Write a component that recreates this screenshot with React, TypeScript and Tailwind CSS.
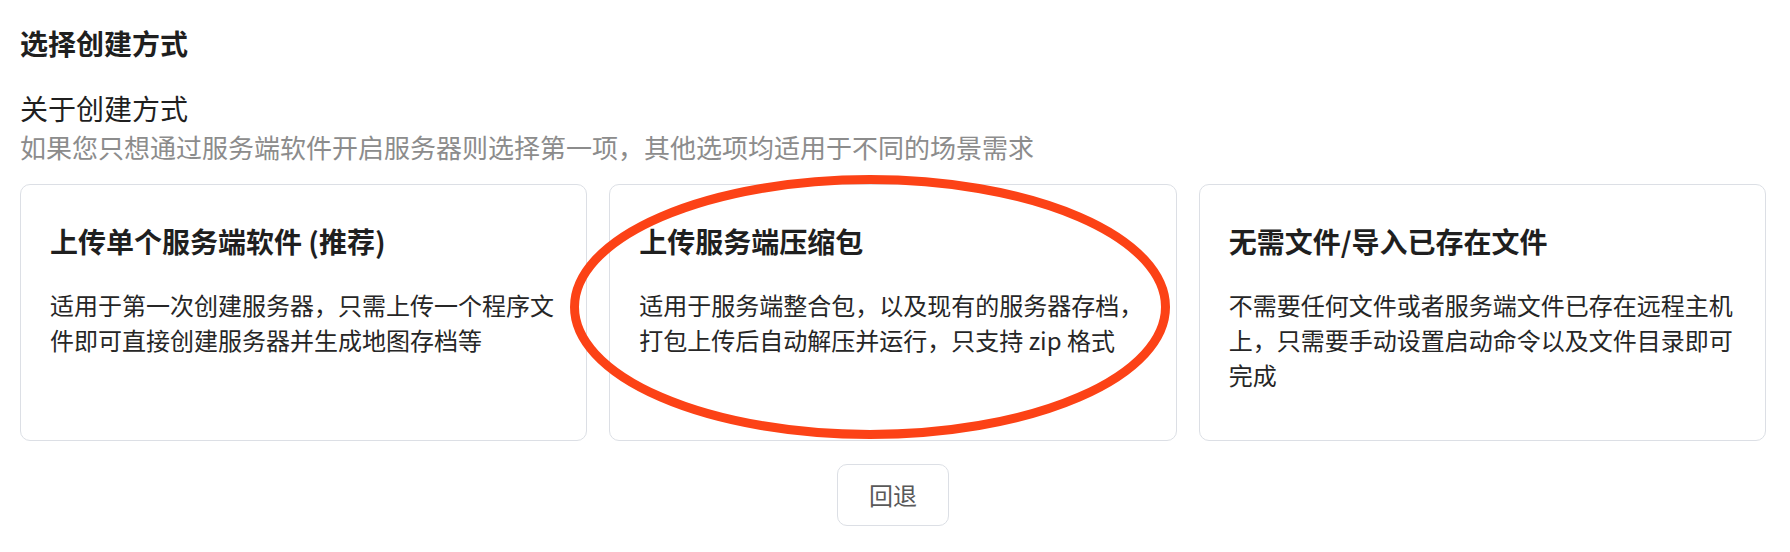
import React from "react";

const options = [
  {
    title: "上传单个服务端软件 (推荐)",
    desc: "适用于第一次创建服务器，只需上传一个程序文件即可直接创建服务器并生成地图存档等",
  },
  {
    title: "上传服务端压缩包",
    desc: "适用于服务端整合包，以及现有的服务器存档，打包上传后自动解压并运行，只支持 zip 格式",
  },
  {
    title: "无需文件/导入已存在文件",
    desc: "不需要任何文件或者服务端文件已存在远程主机上，只需要手动设置启动命令以及文件目录即可完成",
  },
];

export default function App() {
  return (
    <div className="relative min-h-[552px] bg-white pl-5 pr-6 pt-[22px] font-['Noto_Sans_CJK_SC',sans-serif] text-[#1f1f1f]">
      <h2 className="text-[28px] font-semibold leading-[42px]">选择创建方式</h2>

      <div className="mt-6">
        <div className="text-[28px] leading-[40px]">关于创建方式</div>
        <div className="text-[26px] leading-[38px] text-[#8c8c8c]">
          如果您只想通过服务端软件开启服务器则选择第一项，其他选项均适用于不同的场景需求
        </div>
      </div>

      <div className="mt-[18px] grid grid-cols-3 gap-[22px]">
        {options.map((o) => (
          <div
            key={o.title}
            className="h-[257px] cursor-pointer rounded-[10px] border border-[#dcdfe5] bg-white px-[29px] pt-[36px] hover:border-[#1677ff]"
          >
            <div className="text-[28px] font-semibold leading-[40px]">{o.title}</div>
            <p className="mt-[26px] text-[24px] leading-[35px] text-[#262626]">{o.desc}</p>
          </div>
        ))}
      </div>

      <div className="mt-[23px] flex justify-center">
        <button className="h-[62px] w-[112px] rounded-[10px] border border-[#dcdfe5] bg-white text-[24px] text-[#595959]">
          回退
        </button>
      </div>

      {/* annotation */}
      <svg
        className="pointer-events-none absolute left-[570px] top-[175px]"
        width="600"
        height="264"
        viewBox="0 0 600 264"
      >
        <ellipse cx="300" cy="132" rx="295.5" ry="127.5" fill="none" stroke="#fc4216" strokeWidth="9" />
      </svg>
    </div>
  );
}
